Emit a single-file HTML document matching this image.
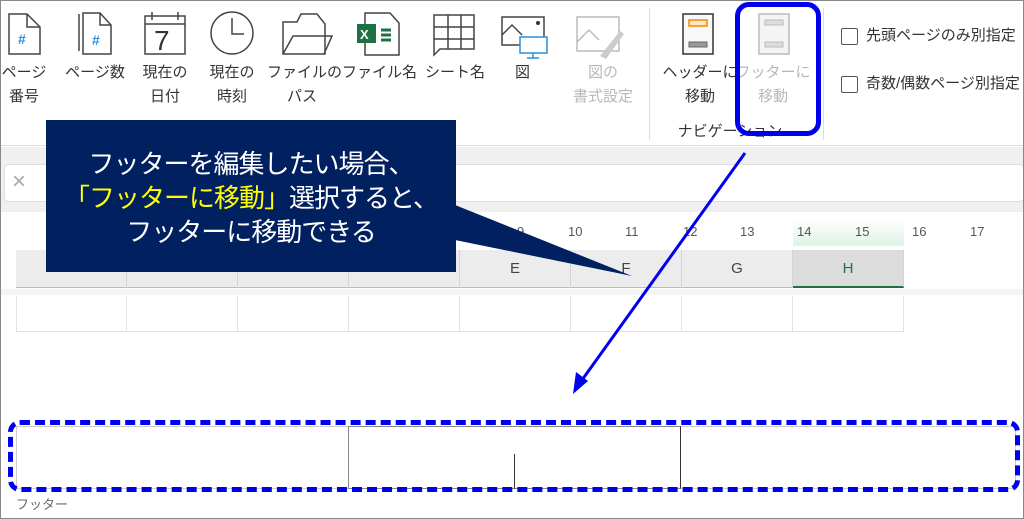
<!DOCTYPE html>
<html><head><meta charset="utf-8"><style>
*{margin:0;padding:0;box-sizing:border-box}
body{width:1024px;height:519px;overflow:hidden;background:#fff;font-family:"Liberation Sans","Noto Sans CJK JP",sans-serif;position:relative}
.a{position:absolute}
.lb{position:absolute;font-size:15px;color:#333;text-align:center;line-height:24px;white-space:nowrap}
.gr{color:#b8b8b8}
.col{position:absolute;top:250px;height:38px;border-right:1px solid #d4d4d4;font-size:15px;color:#444;text-align:center;line-height:38px}
.cell{position:absolute;top:296px;height:36px;border-right:1px solid #e2e2e2;border-bottom:1px solid #e2e2e2}
.rn{position:absolute;top:224px;font-size:13px;color:#555}
</style></head><body>
<div class="a" style="left:0;top:0;width:1024px;height:519px;border:1px solid #888;z-index:20;pointer-events:none"></div>
<div class="a" style="left:0;top:0;width:1024px;height:146px;background:#fff;border-bottom:1px solid #ddd"></div>
<div class="a" style="left:649px;top:8px;width:1px;height:132px;background:#ddd"></div>
<div class="a" style="left:823px;top:8px;width:1px;height:132px;background:#ddd"></div>
<svg class="a" style="left:0;top:0" width="830" height="70">
<g fill="none" stroke="#444" stroke-width="1.5">
<path d="M9 14h18l13 13v27H9z M27 14v13h13"/>
<path d="M79 14v37 M83 13h17l11 12v29H83z M100 13v12h11"/>
<path d="M145 16h40v38h-40z M145 24h40 M152 12v8 M178 12v8"/>
<circle cx="232" cy="33" r="21"/><path d="M232 18v16h12"/>
<path d="M283 22h14l4-8h16l8 10v30h-42z M283 54l10-18h39l-8 18"/>
<path d="M365 13h25l9 10v32h-34z"/>
<path d="M434 15h40v34h-34l-6 6z M434 27h40 M434 39h40 M448 15v34 M461 15v34"/>
<path d="M502 17h42v28h-42z M502 35l10-10 10 10"/>
</g>
<text x="18" y="44" font-size="14" font-weight="bold" fill="#2b8fd9">#</text>
<text x="92" y="45" font-size="14" font-weight="bold" fill="#2b8fd9">#</text>
<text x="154" y="50" font-size="28" fill="#333" font-family="Liberation Sans">7</text>
<rect x="357" y="24" width="19" height="19" fill="#1e7145"/><text x="360" y="39" font-size="13" font-weight="bold" fill="#fff">X</text>
<path d="M381 30h10M381 35h10M381 40h10" stroke="#1e7145" stroke-width="3"/>
<circle cx="538" cy="23" r="2" fill="#333"/>
<rect x="520" y="37" width="27" height="16" fill="#fff" stroke="#2b8fd9" stroke-width="1.5"/><path d="M533 53v5M527 58h12" stroke="#2b8fd9" stroke-width="1.5"/>
<path d="M577 17h42v34h-42z M577 42l12-12 10 10" fill="none" stroke="#bbb" stroke-width="1.5"/>
<path d="M600 56l20-25 4 3-18 25z" fill="#ccc"/>
<rect x="683" y="14" width="30" height="40" fill="#f8f8f8" stroke="#333" stroke-width="1.5"/>
<rect x="689" y="20" width="18" height="6" fill="#fde7c7" stroke="#f08a00" stroke-width="1.5"/>
<rect x="689" y="42" width="18" height="5" fill="#999" stroke="#666"/>
<rect x="759" y="14" width="30" height="40" fill="#f4f4f4" stroke="#bbb" stroke-width="1.5"/>
<rect x="765" y="20" width="18" height="5" fill="#ddd" stroke="#bbb"/>
<rect x="765" y="42" width="18" height="5" fill="#ddd" stroke="#bbb"/>
</svg>
<div class="lb" style="left:0;top:61px;width:48px">ページ<br>番号</div>
<div class="lb" style="left:60px;top:61px;width:70px">ページ数</div>
<div class="lb" style="left:135px;top:61px;width:60px">現在の<br>日付</div>
<div class="lb" style="left:202px;top:61px;width:60px">現在の<br>時刻</div>
<div class="lb" style="left:267px;top:61px;width:70px">ファイルの<br>パス</div>
<div class="lb" style="left:342px;top:61px;width:75px">ファイル名</div>
<div class="lb" style="left:420px;top:61px;width:70px">シート名</div>
<div class="lb" style="left:505px;top:61px;width:35px">図</div>
<div class="lb gr" style="left:568px;top:61px;width:70px">図の<br>書式設定</div>
<div class="lb" style="left:660px;top:61px;width:80px">ヘッダーに<br>移動</div>
<div class="lb gr" style="left:733px;top:61px;width:80px">フッターに<br>移動</div>
<div class="lb" style="left:675px;top:122px;width:110px;line-height:20px">ナビゲーション</div>
<div class="a" style="left:841px;top:28px;width:17px;height:17px;border:1px solid #555;border-radius:2px"></div>
<div class="lb" style="left:866px;top:24px">先頭ページのみ別指定</div>
<div class="a" style="left:841px;top:76px;width:17px;height:17px;border:1px solid #555;border-radius:2px"></div>
<div class="lb" style="left:866px;top:72px">奇数/偶数ページ別指定</div>
<div class="a" style="left:735px;top:2px;width:86px;height:134px;border:5px solid #0000ee;border-radius:14px"></div>
<div class="a" style="left:0;top:147px;width:1024px;height:65px;background:#f0f0f0"></div>
<div class="a" style="left:4px;top:164px;width:1020px;height:38px;background:#fff;border:1px solid #ddd;border-radius:4px"></div>
<div class="a" style="left:12px;top:168px;font-size:24px;color:#aaa">×</div>
<div class="a" style="left:0;top:214px;width:1024px;height:80px;background:#fff"></div>
<div class="a" style="left:793px;top:218px;width:111px;height:28px;background:linear-gradient(#fff,#dff3e6)"></div>
<div class="a" style="left:16px;top:250px;width:888px;height:38px;background:#ececec;border-bottom:1px solid #bbb"></div>
<div class="rn" style="left:517px">9</div><div class="rn" style="left:568px">10</div><div class="rn" style="left:625px">11</div><div class="rn" style="left:683px">12</div><div class="rn" style="left:740px">13</div><div class="rn" style="left:797px">14</div><div class="rn" style="left:855px">15</div><div class="rn" style="left:912px">16</div><div class="rn" style="left:970px">17</div>
<div class="col" style="left:16px;width:111px"></div><div class="col" style="left:127px;width:111px"></div><div class="col" style="left:238px;width:111px"></div><div class="col" style="left:349px;width:111px"></div>
<div class="col" style="left:460px;width:111px">E</div><div class="col" style="left:571px;width:111px">F</div><div class="col" style="left:682px;width:111px">G</div>
<div class="col" style="left:793px;width:111px;background:#dcdcdc;color:#1e7145;border-bottom:2px solid #1e7145">H</div>
<div class="a" style="left:0;top:289px;width:1024px;height:6px;background:#f4f4f4"></div>
<div class="cell" style="left:16px;width:111px;border-left:1px solid #e2e2e2"></div><div class="cell" style="left:127px;width:111px"></div><div class="cell" style="left:238px;width:111px"></div><div class="cell" style="left:349px;width:111px"></div><div class="cell" style="left:460px;width:111px"></div><div class="cell" style="left:571px;width:111px"></div><div class="cell" style="left:682px;width:111px"></div><div class="cell" style="left:793px;width:111px"></div>
<div class="a" style="left:16px;top:426px;width:1000px;height:63px;border:1px solid #ccc"></div>
<div class="a" style="left:348px;top:426px;width:333px;height:63px;border:1px solid #888;border-right-color:#333"></div>
<div class="a" style="left:514px;top:454px;width:1px;height:35px;background:#333"></div>
<div class="a" style="left:8px;top:420px;width:1012px;height:72px;border:5px dashed #0000ee;border-radius:12px"></div>
<div class="a" style="left:16px;top:494px;font-size:13px;color:#666">フッター</div>
<svg class="a" style="left:0;top:0;z-index:5" width="1024" height="519">
<polygon points="455,205 455,240 632,276" fill="#002060"/>
<line x1="745" y1="153" x2="582" y2="380" stroke="#0000ee" stroke-width="3"/>
<polygon points="573,394 576,372 588,381" fill="#0000ee"/>
</svg>
<div class="a" style="left:46px;top:120px;width:410px;height:152px;background:#002060;z-index:6;color:#fff;font-size:26px;line-height:34px;text-align:center;padding-top:27px;letter-spacing:-1px;white-space:nowrap">フッターを編集したい場合、<br><span style="color:#ffff00">「フッターに移動」</span>選択すると、<br>フッターに移動できる</div>
</body></html>
